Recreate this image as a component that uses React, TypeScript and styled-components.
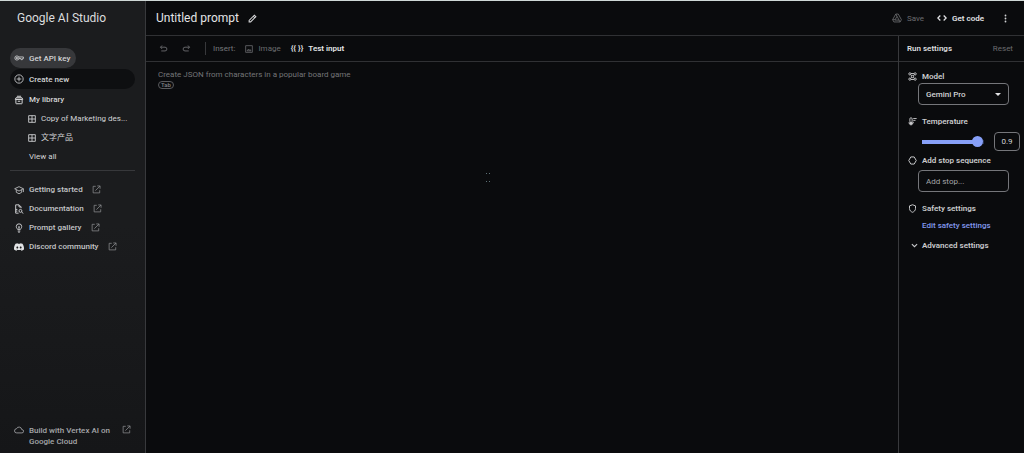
import React from 'react';
import styled, { createGlobalStyle } from 'styled-components';

const GlobalStyle = createGlobalStyle`
  *, *::before, *::after { box-sizing: border-box; }
  html, body { margin: 0; background: #0a0b0d; }
  body, button, input, select, textarea {
    font-family: Roboto, "Noto Sans CJK SC", sans-serif;
    font-size: 8px;
    line-height: 11px;
    color: #d3d4d6;
  }
  button { border: 0; background: none; padding: 0; cursor: pointer; }
  h1, h2 { margin: 0; }
  a { color: inherit; text-decoration: none; }
`;

const line = '#303134';

const Page = styled.div`
  display: flex;
  min-height: 100vh;
  border-top: 1px solid #cfd8d6;
`;

const Sidebar = styled.aside`
  flex: none;
  width: 146px;
  display: flex;
  flex-direction: column;
  padding: 10px 10px 6px;
  background: linear-gradient(#1b1c1e, #1b1c1e 50%, #151618);
  border-right: 1px solid #38393c;
`;

const Brand = styled.div`
  padding-left: 7px;
  font-size: 12px;
  line-height: 14px;
  color: #dcdddf;
`;

const Nav = styled.nav`
  display: flex;
  flex-direction: column;
  align-items: stretch;
  padding-top: 23px;
`;

const NavButton = styled.button<{ $tone?: 'raised' | 'sunken' }>`
  display: flex;
  align-items: center;
  align-self: ${(p) => (p.$tone === 'raised' ? 'flex-start' : 'stretch')};
  gap: 5px;
  height: ${(p) => (p.$tone ? 20 : 19)}px;
  padding: 0 6px 0 4px;
  margin-bottom: ${(p) => (p.$tone ? 1 : 0)}px;
  border-radius: 10px;
  font-weight: 500;
  background: ${(p) => (p.$tone === 'raised' ? '#37383b' : p.$tone === 'sunken' ? '#0e0f11' : 'none')};
`;

const FileLink = styled.a`
  display: flex;
  align-items: center;
  gap: 5px;
  height: 19px;
  padding-left: 18px;
  white-space: nowrap;
`;

const ViewAll = styled.a`
  display: flex;
  align-items: center;
  height: 19px;
  padding-left: 19px;
`;

const Divider = styled.hr`
  width: 100%;
  height: 1px;
  margin: 4px 0 9px;
  border: 0;
  background: #37383b;
`;

const OutLink = styled.a`
  display: flex;
  align-items: center;
  gap: 5px;
  height: 19px;
  padding-left: 4px;
  font-weight: 500;
  color: #c4c5c8;
`;

const OutMark = styled.span`
  display: flex;
  margin-left: 4px;
  color: #8b8c8f;
`;

const CloudLink = styled.a`
  display: flex;
  align-items: flex-start;
  gap: 5px;
  margin-top: auto;
  padding: 0 4px;
  font-weight: 500;
  color: #a5a6a9;
  & > span:last-child { margin-left: auto; }
`;

const Work = styled.div`
  flex: 1;
  min-width: 0;
  display: flex;
  flex-direction: column;
`;

const Header = styled.header`
  display: flex;
  align-items: center;
  gap: 9px;
  height: 35px;
  padding: 0 14px 0 10px;
  border-bottom: 1px solid ${line};
`;

const Title = styled.h1`
  font-size: 12px;
  line-height: 14px;
  font-weight: 400;
  color: #e3e4e6;
`;

const IconButton = styled.button<{ $dim?: boolean }>`
  display: flex;
  color: ${(p) => (p.$dim ? '#6b6c6f' : '#d3d4d6')};
`;

const HeaderActions = styled.div`
  display: flex;
  align-items: center;
  gap: 13px;
  margin-left: auto;
  & > :last-child { margin-left: 4px; }
`;

const TextButton = styled.button<{ $dim?: boolean }>`
  display: flex;
  align-items: center;
  gap: 5px;
  font-weight: ${(p) => (p.$dim ? 400 : 600)};
  color: ${(p) => (p.$dim ? '#6b6c6f' : '#e3e4e6')};
`;

const Columns = styled.div`
  flex: 1;
  display: flex;
`;

const Editor = styled.main`
  flex: 1;
  min-width: 0;
  display: flex;
  flex-direction: column;
`;

const Toolbar = styled.div`
  display: flex;
  align-items: center;
  gap: 14px;
  height: 26px;
  padding: 0 13px;
  border-bottom: 1px solid ${line};
`;

const Insert = styled.div`
  display: flex;
  align-items: center;
  gap: 10px;
  height: 13px;
  padding-left: 7px;
  border-left: 1px solid #37383b;
  color: #77787b;
`;

const Canvas = styled.div`
  position: relative;
  flex: 1;
  display: flex;
  flex-direction: column;
  align-items: flex-start;
  padding: 7px 12px;
`;

const Prompt = styled.textarea`
  width: 100%;
  height: 12px;
  padding: 0;
  border: 0;
  outline: 0;
  resize: none;
  overflow: hidden;
  background: none;
  &::placeholder { color: #747578; opacity: 1; }
`;

const TabKey = styled.kbd`
  padding: 0 2px;
  border: 1px solid #5a5b5e;
  border-radius: 4px;
  font: 500 6px/6px Roboto, sans-serif;
  color: #808184;
`;

const Caret = styled.div`
  position: absolute;
  left: 340px;
  top: 111px;
  display: flex;
`;

const Settings = styled.aside`
  flex: none;
  width: 126px;
  border-left: 1px solid #38393c;
`;

const SettingsHead = styled.div`
  display: flex;
  align-items: center;
  justify-content: space-between;
  height: 26px;
  padding: 0 11px 0 8px;
  border-bottom: 1px solid ${line};
`;

const Heading = styled.h2`
  font-size: 8px;
  line-height: 11px;
  font-weight: 600;
  color: #dcdddf;
`;

const Groups = styled.div`
  display: flex;
  flex-direction: column;
  padding: 8px 4px 8px 9px;
`;

const Label = styled.label`
  display: flex;
  align-items: center;
  gap: 5px;
  height: 12px;
  font-weight: 600;
  color: #c9cacc;
`;

const Field = styled.div<{ $roomy?: boolean }>`
  position: relative;
  display: flex;
  align-items: center;
  margin: ${(p) => (p.$roomy ? 4 : 1)}px 11px 10px 10px;
`;

const boxed = `
  border: 1px solid #75767a;
  border-radius: 4px;
  background: none;
  outline: 0;
`;

const Select = styled.select`
  ${boxed}
  appearance: none;
  width: 100%;
  height: 22px;
  padding: 0 7px;
  font-weight: 500;
  option { background: #1b1c1e; }
`;

const SelectArrow = styled.span`
  position: absolute;
  right: 8px;
  display: flex;
  pointer-events: none;
`;

const SliderRow = styled.div`
  display: flex;
  align-items: center;
  justify-content: space-between;
  padding: 5px 0 3px 14px;
`;

const Slider = styled.input`
  appearance: none;
  width: 62px;
  height: 12px;
  margin: 0;
  background: linear-gradient(to right, #87a0f8 95%, #26304d 95%) center / 100% 4px no-repeat;
  &::-webkit-slider-thumb {
    appearance: none;
    width: 11px;
    height: 11px;
    border-radius: 50%;
    background: #87a0f8;
  }
`;

const ValueBox = styled.input`
  ${boxed}
  width: 26px;
  height: 19px;
  padding: 0;
  text-align: center;
`;

const StopInput = styled.input`
  ${boxed}
  width: 100%;
  height: 22px;
  padding: 0 7px;
  &::placeholder { color: #a5a6a9; opacity: 1; }
`;

const SafetyLink = styled.a`
  margin: 6px 0 9px 14px;
  font-weight: 500;
  color: #8299ee;
`;

const Advanced = styled.button`
  display: flex;
  align-items: center;
  gap: 4px;
  padding-left: 3px;
  font-weight: 600;
  color: #c9cacc;
`;

type IconProps = { size?: number; stroke?: number; children: React.ReactNode };

const Icon = ({ size = 10, stroke = 2, children }: IconProps) => (
  <svg
    width={size}
    height={size}
    viewBox="0 0 24 24"
    fill="none"
    stroke="currentColor"
    strokeWidth={stroke}
    aria-hidden="true"
  >
    {children}
  </svg>
);

const KeyIcon = () => (
  <Icon>
    <circle cx="7" cy="12" r="5" />
    <circle cx="7" cy="12" r="1.5" fill="currentColor" />
    <path d="M12 9.500h10.500v4H20v2.500h-3v-2.500h-5" />
  </Icon>
);
const PlusIcon = () => (
  <Icon><circle cx="12" cy="12" r="10" /><path d="M12 6.500v11M6.500 12h11" /></Icon>
);
const LibraryIcon = () => (
  <Icon stroke={2.4}>
    <path d="M7 3h10M5 6.500h14l2 4H3zM4.500 10.500h15V20a1 1 0 0 1-1 1h-13a1 1 0 0 1-1-1zM9 15h6" />
  </Icon>
);
const GridIcon = () => (
  <Icon size={8} stroke={2.6}><path d="M2 2h20v20H2zM12 2v20M2 12h20" /></Icon>
);
const SchoolIcon = () => (
  <Icon><path d="M12 4 1.500 9 12 14.500 22.500 9zM5.500 11.500v6L12 21l6.500-3.500v-6M22.500 9v8" /></Icon>
);
const DocIcon = () => (
  <Icon stroke={2.4}>
    <path d="M11 22H4V2h8l5 5v3M12 2v5h5M4 13h4M4 17h4" />
    <circle cx="15.5" cy="16.500" r="3.500" />
    <path d="m18 19 4.500 4" />
  </Icon>
);
const BulbIcon = () => (
  <Icon stroke={2.4}>
    <path d="M9 16c0-2-3.500-3-3.500-7.500a6.500 6.500 0 0 1 13 0C18.500 13 15 14 15 16zM9 19.500h6M10.500 22.500h3M9.500 8.500l2.500 2 2.500-2M12 10v5" />
  </Icon>
);
const DiscordIcon = () => (
  <svg width="10" height="10" viewBox="0 0 24 24" fill="#e3e4e6" aria-hidden="true">
    <path
      fillRule="evenodd"
      d="M20.300 4.400A19.800 19.800 0 0 0 15.400 2.900l-.7 1.300a18.300 18.300 0 0 0-5.400 0l-.7-1.300a19.700 19.700 0 0 0-4.900 1.500C.6 9 -.3 13.600.1 18.100a20 20 0 0 0 6 3l1.300-2-1.900-.9.400-.3a14.200 14.200 0 0 0 12.200 0l.4.300-1.900.9 1.300 2a20 20 0 0 0 6-3c.5-5.200-.8-9.700-3.600-13.700zM8 15.300c-1.200 0-2.200-1.100-2.200-2.400s1-2.400 2.200-2.400 2.200 1.100 2.200 2.400-1 2.400-2.200 2.400zm8 0c-1.200 0-2.200-1.100-2.200-2.400s1-2.400 2.200-2.400 2.200 1.100 2.200 2.400-1 2.400-2.200 2.400z"
    />
  </svg>
);
const OpenIcon = () => (
  <Icon size={9}><path d="M10 3.500H3V21h17.500v-7M14 2.500h7.500V10M21.500 2.500 9 15" /></Icon>
);
const CloudIcon = () => (
  <Icon><path d="M6.500 19a5 5 0 0 1-.5-10 6.500 6.500 0 0 1 12.500 2h.5a4 4 0 0 1 0 8z" /></Icon>
);
const PencilIcon = () => (
  <Icon size={9} stroke={2.8}><path d="M3 21v-4L17 3l4 4L7 21zM14 6l4 4" /></Icon>
);
const SaveIcon = () => (
  <Icon>
    <path d="M9 2.500h6L22.500 16l-3 5.500h-15l-3-5.500zM12 8l-5 9h10zM9 2.500 12 8M1.500 16H7M19.500 21.500 17 17" />
  </Icon>
);
const CodeIcon = () => (
  <Icon stroke={3}><path d="m8 6-6 6 6 6M16 6l6 6-6 6" /></Icon>
);
const MoreIcon = () => (
  <svg width="9" height="9" viewBox="0 0 24 24" fill="currentColor" aria-hidden="true">
    <circle cx="12" cy="4" r="2.400" /><circle cx="12" cy="12" r="2.400" /><circle cx="12" cy="20" r="2.400" />
  </svg>
);
const UndoIcon = () => (
  <Icon size={9} stroke={2.4}><path d="M8 4 4 8.500 8 13M4 8.500h12a5 5 0 0 1 0 10H6" /></Icon>
);
const RedoIcon = () => (
  <Icon size={9} stroke={2.4}><path d="m16 4 4 4.500-4 4.500M20 8.500H8a5 5 0 0 0 0 10h10" /></Icon>
);
const ImageIcon = () => (
  <Icon size={8} stroke={2.4}><path d="M2 2h20v20H2zM6 17.500l4-5 3 3.500 2-2.500 3 4z" /></Icon>
);
const ModelIcon = () => (
  <Icon size={9} stroke={2.4}>
    <circle cx="5" cy="5" r="3" /><circle cx="19" cy="5" r="3" />
    <circle cx="5" cy="19" r="3" /><circle cx="19" cy="19" r="3" />
    <circle cx="12" cy="12" r="3" />
    <path d="m7 7 3 3M17 7l-3 3M7 17l3-3M17 17l-3-3M8 4h8M8 20h8" />
  </Icon>
);
const ThermoIcon = () => (
  <Icon size={9} stroke={2.4}>
    <path d="M5 12V5a3 3 0 0 1 6 0v7a5 5 0 1 1-6 0zM14 4h9M14 9h6M14 14h2" />
    <circle cx="8" cy="16.500" r="3" fill="currentColor" />
  </Icon>
);
const StopIcon = () => (
  <Icon size={9} stroke={2.6}><path d="M7.500 2.500h9L22 12l-5.500 9.500h-9L2 12z" /></Icon>
);
const ShieldIcon = () => (
  <Icon size={9} stroke={2.6}><path d="m12 2 8 3v7c0 5-3.500 8.500-8 10-4.500-1.500-8-5-8-10V5z" /></Icon>
);
const ChevronIcon = () => (
  <Icon size={7} stroke={3.6}><path d="m3 7 9 9 9-9" /></Icon>
);

const links = [
  { icon: <SchoolIcon />, text: 'Getting started' },
  { icon: <DocIcon />, text: 'Documentation' },
  { icon: <BulbIcon />, text: 'Prompt gallery' },
  { icon: <DiscordIcon />, text: 'Discord community' },
];

export default function App() {
  return (
    <>
      <GlobalStyle />
      <Page>
        <Sidebar>
          <Brand>Google AI Studio</Brand>
          <Nav>
            <NavButton $tone="raised"><KeyIcon />Get API key</NavButton>
            <NavButton $tone="sunken"><PlusIcon />Create new</NavButton>
            <NavButton><LibraryIcon />My library</NavButton>
            <FileLink href="#marketing"><GridIcon />Copy of Marketing des...</FileLink>
            <FileLink href="#product"><GridIcon />文字产品</FileLink>
            <ViewAll href="#all">View all</ViewAll>
            <Divider />
            {links.map((l) => (
              <OutLink key={l.text} href="#help">
                {l.icon}
                {l.text}
                <OutMark><OpenIcon /></OutMark>
              </OutLink>
            ))}
          </Nav>
          <CloudLink href="#cloud">
            <CloudIcon />
            <span>Build with Vertex AI on<br />Google Cloud</span>
            <OutMark><OpenIcon /></OutMark>
          </CloudLink>
        </Sidebar>
        <Work>
          <Header>
            <Title>Untitled prompt</Title>
            <IconButton aria-label="Rename"><PencilIcon /></IconButton>
            <HeaderActions>
              <TextButton $dim><SaveIcon />Save</TextButton>
              <TextButton><CodeIcon />Get code</TextButton>
              <IconButton aria-label="More"><MoreIcon /></IconButton>
            </HeaderActions>
          </Header>
          <Columns>
            <Editor>
              <Toolbar>
                <IconButton aria-label="Undo" $dim><UndoIcon /></IconButton>
                <IconButton aria-label="Redo" $dim><RedoIcon /></IconButton>
                <Insert>
                  <span>Insert:</span>
                  <TextButton $dim><ImageIcon />Image</TextButton>
                  <TextButton><span>{'{{ }}'}</span>Test input</TextButton>
                </Insert>
              </Toolbar>
              <Canvas>
                <Prompt aria-label="Prompt" placeholder="Create JSON from characters in a popular board game" />
                <TabKey>Tab</TabKey>
                <Caret>
                  <svg width="5" height="10" viewBox="0 0 5 10" fill="#5d7176" aria-hidden="true">
                    <path d="M0 0h1v1H0zM3 0h1v1H3zM0 8h1v1H0zM3 8h1v1H3z" />
                  </svg>
                </Caret>
              </Canvas>
            </Editor>
            <Settings>
              <SettingsHead>
                <Heading>Run settings</Heading>
                <TextButton $dim>Reset</TextButton>
              </SettingsHead>
              <Groups>
                <Label htmlFor="model"><ModelIcon />Model</Label>
                <Field>
                  <Select id="model"><option>Gemini Pro</option></Select>
                  <SelectArrow>
                    <svg width="6" height="3" viewBox="0 0 6 3" fill="#e3e4e6" aria-hidden="true"><path d="M0 0h6L3 3z" /></svg>
                  </SelectArrow>
                </Field>
                <Label htmlFor="temperature"><ThermoIcon />Temperature</Label>
                <SliderRow>
                  <Slider id="temperature" type="range" min="0" max="1" step="0.01" defaultValue="0.98" />
                  <ValueBox aria-label="Temperature value" defaultValue="0.9" />
                </SliderRow>
                <Label htmlFor="stop"><StopIcon />Add stop sequence</Label>
                <Field $roomy><StopInput id="stop" placeholder="Add stop..." /></Field>
                <Label as="div"><ShieldIcon />Safety settings</Label>
                <SafetyLink href="#safety">Edit safety settings</SafetyLink>
                <Advanced><ChevronIcon />Advanced settings</Advanced>
              </Groups>
            </Settings>
          </Columns>
        </Work>
      </Page>
    </>
  );
}
